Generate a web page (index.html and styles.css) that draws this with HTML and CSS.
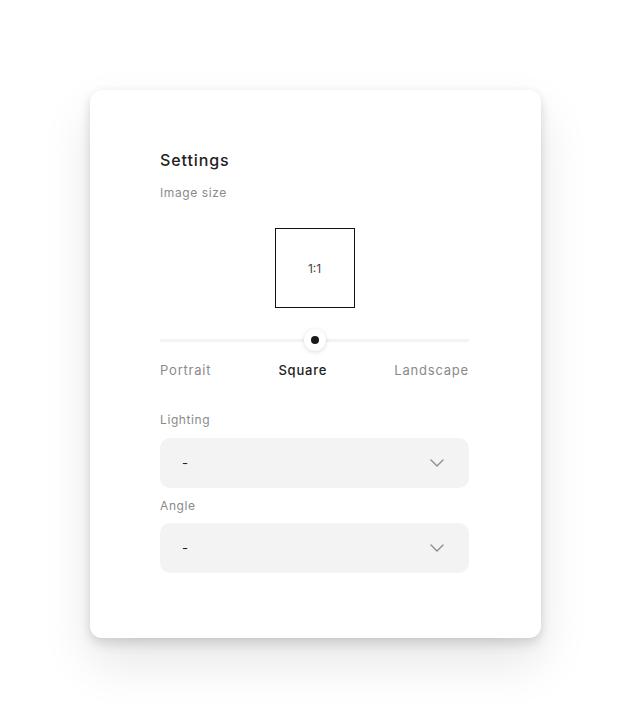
FILE: index.html
```html
<!DOCTYPE html>
<html>
<head>
<meta charset="utf-8">
<link rel="stylesheet" href="styles.css">
</head>
<body>
<div class="page">
<div class="card">
  <div class="title">Settings</div>
  <div class="label label-size">Image size</div>
  <div class="preview-wrap"><div class="preview">1:1</div></div>
  <div class="slider">
    <div class="track"></div>
    <div class="thumb"><div class="dot"></div></div>
  </div>
  <div class="options">
    <span class="opt">Portrait</span>
    <span class="opt active">Square</span>
    <span class="opt">Landscape</span>
  </div>
  <div class="label label-field">Lighting</div>
  <div class="select">
    <span class="value">-</span>
    <svg class="chev" width="16" height="10" viewBox="0 0 16 10"><path d="M2 2 L8 8 L14 2" fill="none" stroke="#8a8a8a" stroke-width="1.3" stroke-linecap="round" stroke-linejoin="round"/></svg>
  </div>
  <div class="label label-field2">Angle</div>
  <div class="select">
    <span class="value">-</span>
    <svg class="chev" width="16" height="10" viewBox="0 0 16 10"><path d="M2 2 L8 8 L14 2" fill="none" stroke="#8a8a8a" stroke-width="1.3" stroke-linecap="round" stroke-linejoin="round"/></svg>
  </div>
</div>
</div>
</body>
</html>
```
FILE: styles.css
```css
* { box-sizing: border-box; }
html, body { margin: 0; padding: 0; background: #ffffff; }
body { font-family: "Inter", "Lato", sans-serif; color: #222; }
.page { padding: 90px 0 0 90px; min-height: 728px; }
.card {
  width: 451px;
  height: 548px;
  background: #fff;
  border-radius: 12px;
  padding: 60px 72px 0 70px;
  box-shadow: 0 6px 12px rgba(0,0,0,0.12), 0 24px 50px rgba(0,0,0,0.10), 0 0 8px rgba(0,0,0,0.04);
}
.title { font-size: 16px; line-height: 20px; font-weight: 500; color: #222; letter-spacing: 0.9px; }
.label { font-size: 12px; line-height: 16px; color: #8a8a8a; letter-spacing: 0.6px; }
.label-size { margin-top: 15px; }
.preview-wrap { display: flex; justify-content: center; margin-top: 27px; }
.preview {
  width: 80px; height: 80px; border: 1px solid #111;
  display: flex; align-items: center; justify-content: center;
  font-size: 12px; color: #444;
}
.slider { position: relative; height: 22px; margin-top: 21px; display: flex; align-items: center; justify-content: center; }
.track { position: absolute; left: 0; right: 0; top: 10px; height: 3px; background: #f3f3f3; border-radius: 2px; }
.thumb {
  position: relative; width: 22px; height: 22px; border-radius: 50%; background: #fff;
  box-shadow: 0 1px 4px rgba(0,0,0,0.15);
  display: flex; align-items: center; justify-content: center;
}
.dot { width: 8px; height: 8px; border-radius: 50%; background: #1a1a1a; }
.options { display: flex; justify-content: space-between; margin-top: 10px; font-size: 13px; line-height: 18px; letter-spacing: 0.8px; }
.opt { color: #8a8a8a; }
.opt.active { color: #222; font-weight: 500; }
.label-field { margin-top: 33px; }
.label-field2 { margin-top: 10px; }
.select {
  margin-top: 10px; height: 50px; background: #f3f3f3; border-radius: 10px;
  display: flex; align-items: center; justify-content: space-between;
  padding: 0 24px 0 22px; font-size: 13px; color: #222;
}
.label-field2 + .select { margin-top: 9px; }
.chev { display: block; }
```
